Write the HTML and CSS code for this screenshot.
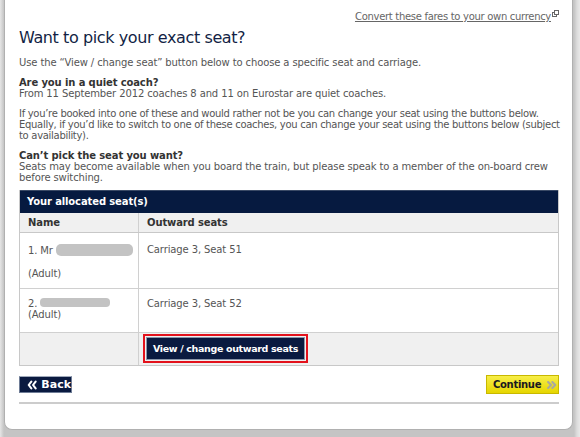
FILE: index.html
```html
<!DOCTYPE html>
<html>
<head>
<meta charset="utf-8">
<link rel="stylesheet" href="styles.css">
</head>
<body>
<div class="page">
  <div class="card">
    <div class="toplink"><a href="#">Convert these fares to your own currency</a><svg class="ext" width="7" height="7" viewBox="0 0 7 7"><rect x="0.5" y="2.5" width="4" height="4" fill="none" stroke="#666"/><rect x="2.5" y="0.5" width="4" height="4" fill="#fff" stroke="#666"/></svg></div>
    <h1>Want to pick your exact seat?</h1>
    <p class="intro">Use the “View / change seat” button below to choose a specific seat and carriage.</p>
    <p><b>Are you in a quiet coach?</b><br>From 11 September 2012 coaches 8 and 11 on Eurostar are quiet coaches.</p>
    <p class="tight">If you’re booked into one of these and would rather not be you can change your seat using the buttons below.<br>Equally, if you’d like to switch to one of these coaches, you can change your seat using the buttons below (subject<br>to availability).</p>
    <p><b>Can’t pick the seat you want?</b><br>Seats may become available when you board the train, but please speak to a member of the on-board crew<br>before switching.</p>

    <div class="seats">
      <div class="seats-head">Your allocated seat(s)</div>
      <div class="row sub">
        <div class="c1">Name</div>
        <div class="c2">Outward seats</div>
      </div>
      <div class="row r1">
        <div class="c1"><div class="nm">1. Mr <span class="blur b1"></span></div><div class="ad1">(Adult)</div></div>
        <div class="c2">Carriage 3, Seat 51</div>
      </div>
      <div class="row r2">
        <div class="c1"><div class="nm2">2. <span class="blur b2"></span></div><div>(Adult)</div></div>
        <div class="c2">Carriage 3, Seat 52</div>
      </div>
      <div class="row r3">
        <div class="c1"></div>
        <div class="c2"><span class="hl"><button class="btn-view">View / change outward seats</button></span></div>
      </div>
    </div>

    <div class="nav">
      <button class="btn-back"><svg width="12" height="10" viewBox="0 0 12 10"><path d="M5 1 L2 5 L5 9 M10 1 L7 5 L10 9" fill="none" stroke="#fff" stroke-width="2.4" stroke-linecap="round" stroke-linejoin="round"/></svg>Back</button>
      <button class="btn-cont">Continue<svg width="14" height="10" viewBox="0 0 14 10"><path d="M2.5 1.5 L6 5 L2.5 8.5 M7.5 1.5 L11 5 L7.5 8.5" fill="none" stroke="#a9a9a0" stroke-width="2.6" stroke-linecap="round" stroke-linejoin="round"/></svg></button>
    </div>
    <div class="rule"></div>
  </div>
</div>
</body>
</html>
```
FILE: styles.css
```css
html, body { margin: 0; padding: 0; }
body {
  width: 580px; height: 437px; overflow: hidden;
  background: linear-gradient(to right, #e6e6e6 0, #c4c4c4 4px, #c4c4c4 574px, #dcdcdc 577px, #e8e8e8 580px);
  font-family: "DejaVu Sans", Verdana, sans-serif;
  font-size: 10px;
  letter-spacing: -0.12px;
  color: #555;
}
.page { padding: 0 0 0 4px; }
.card {
  width: 569px;
  height: 430px;
  box-sizing: border-box;
  background: #fff;
  border: 1px solid #b0b0b0;
  border-top: none;
  border-radius: 0 0 8px 8px;
  padding: 10px 13px 0 14px;
}
.toplink { text-align: right; height: 13px; line-height: 13px; padding-right: 0; }
.toplink a { color: #666; text-decoration: underline; font-size: 10px; letter-spacing: -0.3px; }
.ext { margin-left: 1px; vertical-align: 3px; }
h1 {
  margin: 5px 0 0; font-weight: normal; font-size: 16px; line-height: 20px;
  color: #131f45; letter-spacing: -0.4px;
}
p { margin: 9px 0 0; line-height: 11px; white-space: nowrap; }
p.intro { margin-top: 9px; }
p.tight { letter-spacing: -0.3px; }
p b { color: #333; }
.seats { margin-top: 7px; border: 1px solid #c8c8c8; border-top: none; }
.seats-head {
  background: #061a40; color: #fff; font-weight: bold; font-size: 10px;
  height: 22px; line-height: 22px; padding-left: 7px; border-top: 1px solid #3a4a66;
}
.row { display: flex; border-top: 1px solid #d0d0d0; }
.c1 { width: 110px; padding-left: 8px; border-right: 1px solid #d0d0d0; }
.c2 { flex: 1; padding-left: 8px; }
.sub { background: #f0f0f0; height: 19px; line-height: 19px; font-weight: bold; color: #333; border-top: none; border-bottom: 1px solid #c8c8c8; }
.sub + .row { border-top: none; }
.r1 { height: 55px; }
.r1 .c1 { padding-top: 11px; }
.r1 .nm { line-height: 12px; }
.r1 .ad1 { margin-top: 11px; line-height: 12px; }
.r1 .c2 { padding-top: 11px; line-height: 12px; }
.r2 { height: 43px; }
.r2 .c1 { padding-top: 9px; line-height: 11px; }
.r2 .c2 { padding-top: 9px; line-height: 12px; }
.blur { display: inline-block; background: #c3c3c3; border-radius: 5px; vertical-align: -2px; }
.b1 { width: 77px; height: 12px; }
.b2 { width: 70px; height: 9px; border-radius: 4px; vertical-align: 0; }
.r3 { background: #f0f0f0; height: 32px; }
.r3 .c2 { padding-left: 4px; padding-top: 1px; }
.hl { display: inline-block; border: 2px solid #e3121c; padding: 1px; }
.btn-view {
  display: block; font-family: inherit; font-weight: bold; font-size: 9.5px; letter-spacing: -0.35px; color: #fff;
  background: #0a1a40; border: 1px solid #8a96aa; height: 23px; padding: 0; width: 159px; white-space: nowrap;
}
.nav { display: flex; justify-content: space-between; align-items: center; margin-top: 9px; }
.btn-back {
  display: flex; align-items: center; gap: 4px;
  font-family: inherit; font-weight: bold; font-size: 11px; color: #fff; letter-spacing: 0;
  background: #0a1a40; border: 1px solid #6e7c96; border-top-color: #a0aabb;
  height: 17px; padding: 0 0 0 7px; width: 53px; white-space: nowrap;
}
.btn-cont {
  display: flex; align-items: center; gap: 5px;
  font-family: inherit; font-weight: bold; font-size: 10px; color: #1a1a20; letter-spacing: -0.3px;
  background: linear-gradient(#f7ee48, #e6d600); border: 1px solid #c8b800;
  height: 19px; padding: 0 0 0 6px; width: 73px; white-space: nowrap;
}
.rule { margin-top: 8px; border-top: 2px solid #cccccc; }
```
